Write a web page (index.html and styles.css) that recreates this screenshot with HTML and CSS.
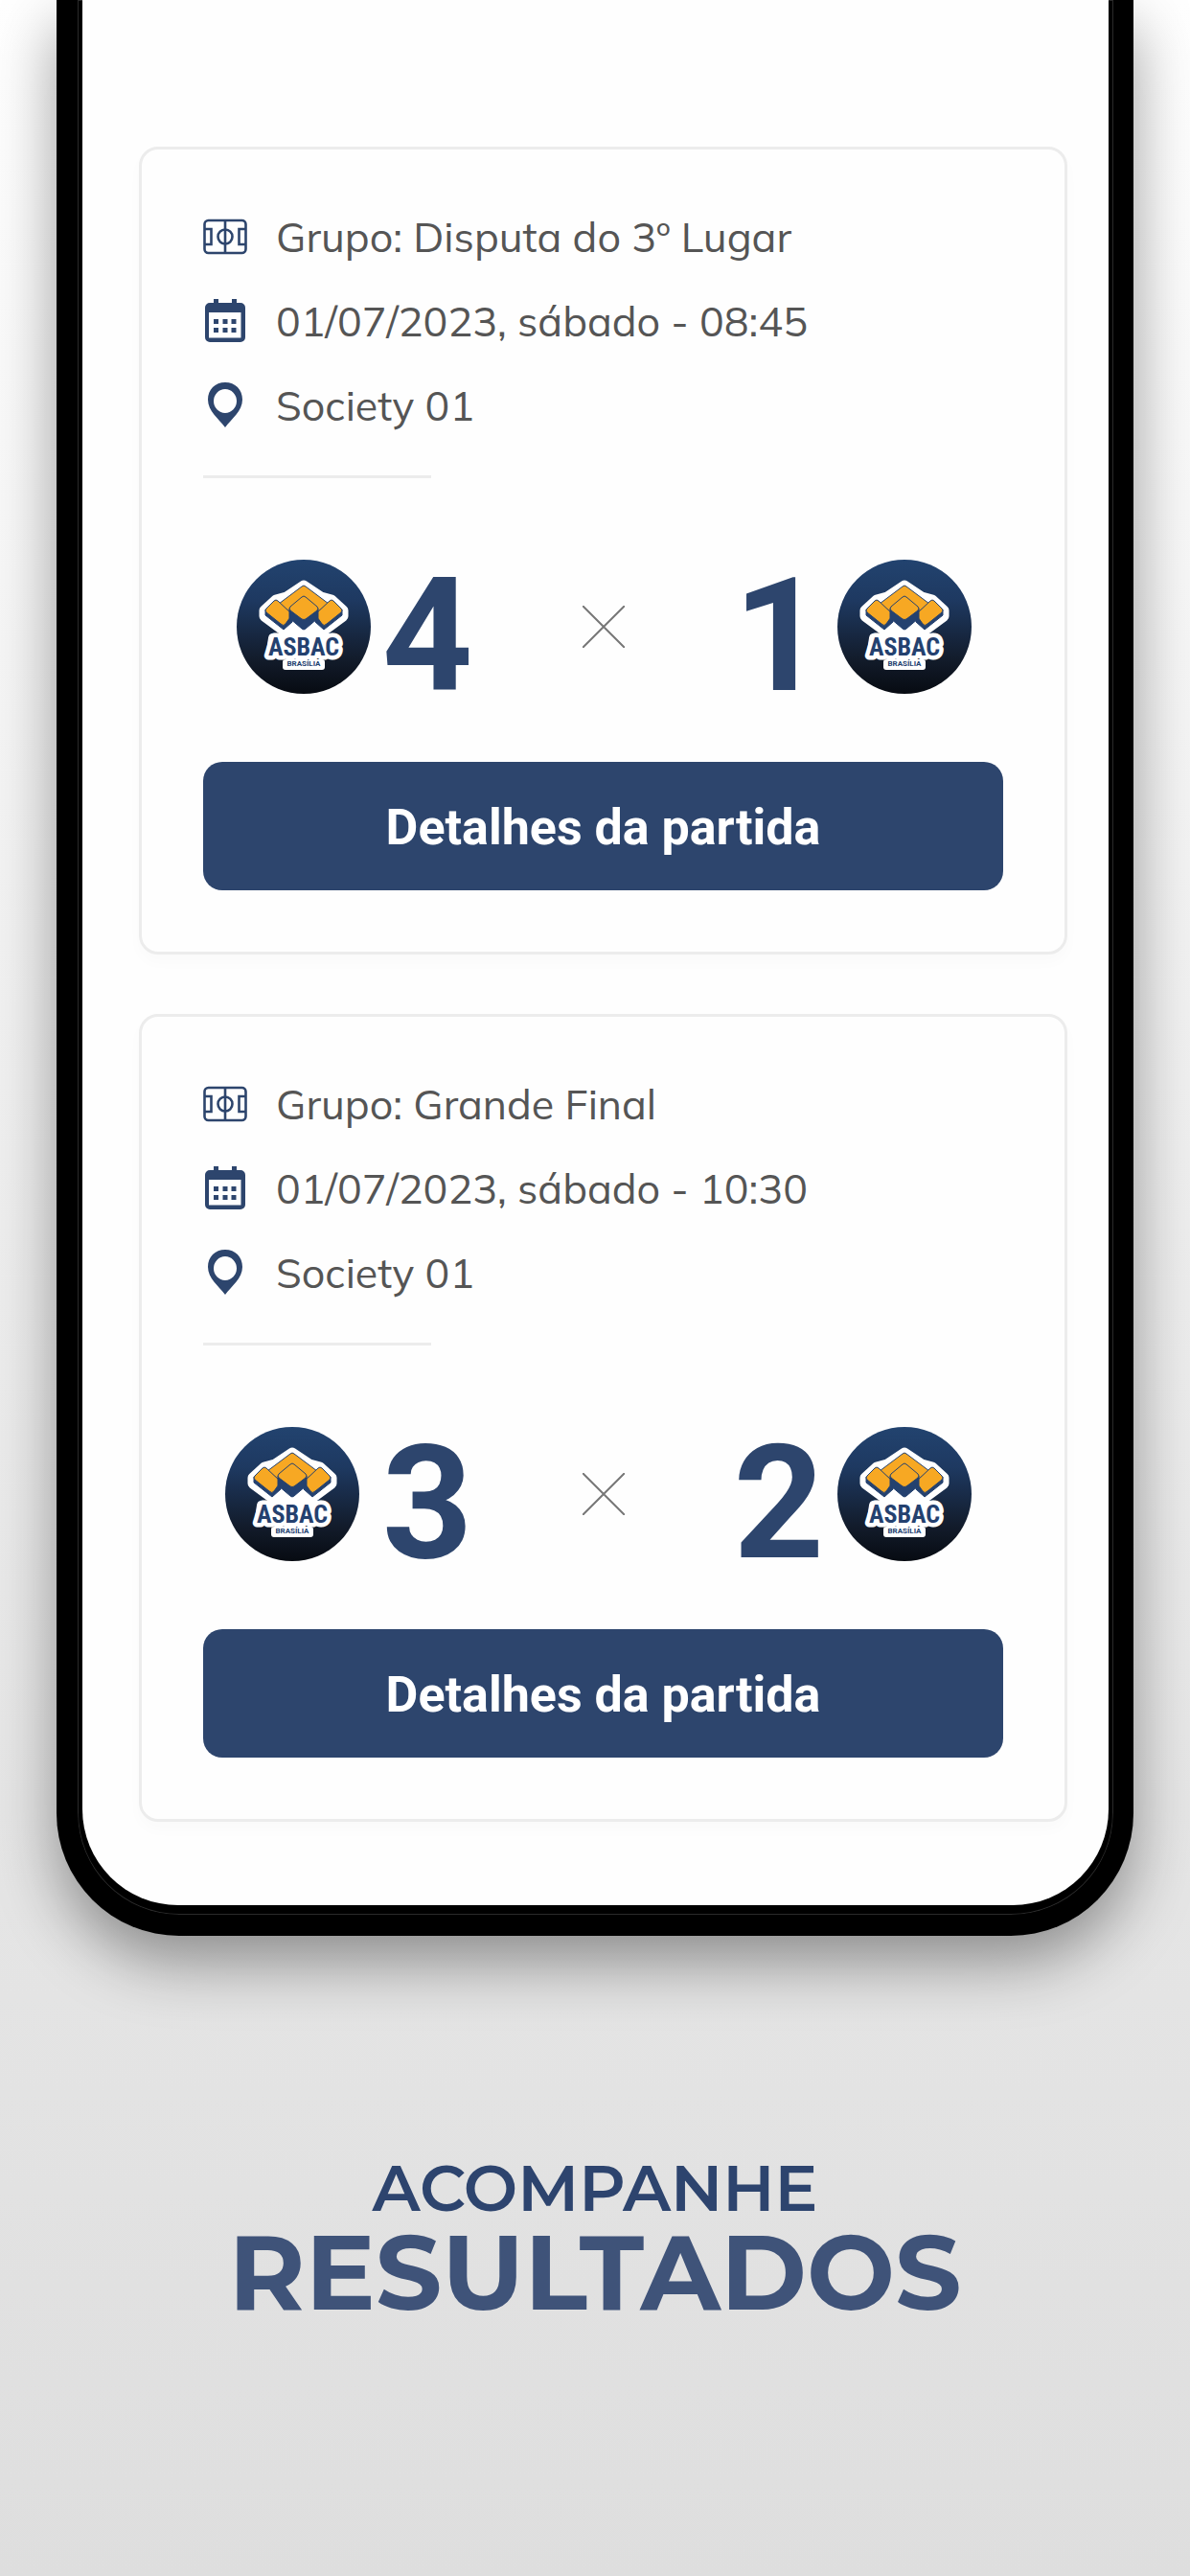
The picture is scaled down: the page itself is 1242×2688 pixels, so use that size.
FILE: index.html
```html
<!DOCTYPE html>
<html lang="pt-BR">
<head>
<meta charset="utf-8">
<meta name="viewport" content="width=device-width, initial-scale=1">
<title>Acompanhe resultados</title>
<link rel="stylesheet" href="styles.css">
</head>
<body>
<svg class="sprite" aria-hidden="true">
  <defs>
    <linearGradient id="crest-bg" x1="0" y1="0" x2="0" y2="1">
      <stop offset="0" stop-color="#22436f"/>
      <stop offset="0.3" stop-color="#1e3961"/>
      <stop offset="0.75" stop-color="#121b2a"/>
      <stop offset="1" stop-color="#070b12"/>
    </linearGradient>
    <symbol id="field" viewBox="0 0 46 48">
      <g fill="none" stroke="#2d456d" stroke-width="2.6">
        <rect x="1.5" y="7" width="43" height="34" rx="4"/>
        <path d="M23 7v34M1.500 16h7v16h-7M44.500 16h-7v16h7"/>
        <circle cx="23" cy="24" r="7.500"/>
      </g>
    </symbol>
    <symbol id="calendar" viewBox="0 0 46 48">
      <path fill="#2d456d" fill-rule="evenodd" d="M11 1h5v4h14V1h5v4h4a5 5 0 0 1 5 5v31a5 5 0 0 1-5 5H7a5 5 0 0 1-5-5V10a5 5 0 0 1 5-5h4zM6 15v26.500h33.500V15z"/>
      <path fill="#2d456d" d="M11 22h5v5h-5zM20.500 22h5v5h-5zM29.500 22h5v5h-5zM11 31h5v5h-5zM20.500 31h5v5h-5zM29.500 31h5v5h-5z"/>
    </symbol>
    <symbol id="pin" viewBox="0 0 46 48">
      <path fill="#2d456d" fill-rule="evenodd" d="M23 0C12.500 0 5 7.500 5 18c0 12 11 19.500 18 29 7-9.500 18-17 18-29C41 7.500 33.500 0 23 0zm0 7a12 12.500 0 1 1 0 25 12 12.500 0 0 1 0-25z"/>
    </symbol>
    <symbol id="crest" viewBox="0 0 140 140">
      <circle cx="70" cy="70" r="70" fill="url(#crest-bg)"/>
      <g fill="#fff" stroke="#fff" stroke-width="11" stroke-linejoin="round">
        <path d="M70 27l18 12 11 3 12 11v6L92 73 70 74 48 73 29 59v-6l12-11 11-3z"/>
        <path d="M38 82h64v14H36z" stroke-width="10"/>
        <path d="M51 107h38v5H51z" stroke-width="6"/>
      </g>
      <text class="crest-name" x="70" y="100" text-anchor="middle">ASBAC</text>
      <g stroke="#24416f" stroke-width="1" stroke-linejoin="round">
        <path fill="#f7a823" d="M68 28q2-2 4 0l24 18-26 19-26-19z"/>
        <path fill="#24416f" d="M30 52l28 6v7l-9 8-19-15z"/>
        <path fill="#24416f" d="M110 52l-28 6v7l9 8 19-15z"/>
        <path fill="#f7a823" d="M39 43q2-2 4 0l15 14-7 10q-2 3-5 0L31 55q-2-2 0-4z"/>
        <path fill="#f7a823" d="M101 43q-2-2-4 0L82 57l7 10q2 3 5 0l15-12q2-2 0-4z"/>
        <path fill="#24416f" d="M55 51v10l13 11q2 2 4 0l13-11V51z"/>
        <path fill="#f7a823" d="M68 39q2-2 4 0l12 10q2 2 0 4L72 62q-2 1-4 0L56 53q-2-2 0-4z"/>
      </g>
      <text class="crest-city" x="70" y="111" text-anchor="middle">BRASÍLIA</text>
    </symbol>
    <symbol id="versus" viewBox="0 0 44 44">
      <path d="M0 0l44 44M44 0L0 44" stroke="#777" stroke-width="2"/>
    </symbol>
  </defs>
</svg>
<main class="showcase">
  <section class="phone">
    <div class="screen">
      <article class="match">
        <ul class="facts">
          <li><svg class="icon" aria-hidden="true"><use href="#field"/></svg>Grupo: Disputa do 3º Lugar</li>
          <li><svg class="icon" aria-hidden="true"><use href="#calendar"/></svg>01/07/2023, sábado - 08:45</li>
          <li><svg class="icon" aria-hidden="true"><use href="#pin"/></svg>Society 01</li>
        </ul>
        <hr class="rule">
        <div class="score">
          <div class="team home"><svg class="crest" role="img" aria-label="ASBAC Brasília"><use href="#crest"/></svg><span class="goals">4</span></div>
          <svg class="versus" aria-hidden="true"><use href="#versus"/></svg>
          <div class="team away"><span class="goals">1</span><svg class="crest" role="img" aria-label="ASBAC Brasília"><use href="#crest"/></svg></div>
        </div>
        <button class="details" type="button">Detalhes da partida</button>
      </article>
      <article class="match">
        <ul class="facts">
          <li><svg class="icon" aria-hidden="true"><use href="#field"/></svg>Grupo: Grande Final</li>
          <li><svg class="icon" aria-hidden="true"><use href="#calendar"/></svg>01/07/2023, sábado - 10:30</li>
          <li><svg class="icon" aria-hidden="true"><use href="#pin"/></svg>Society 01</li>
        </ul>
        <hr class="rule">
        <div class="score">
          <div class="team home spaced"><svg class="crest" role="img" aria-label="ASBAC Brasília"><use href="#crest"/></svg><span class="goals">3</span></div>
          <svg class="versus" aria-hidden="true"><use href="#versus"/></svg>
          <div class="team away"><span class="goals">2</span><svg class="crest" role="img" aria-label="ASBAC Brasília"><use href="#crest"/></svg></div>
        </div>
        <button class="details" type="button">Detalhes da partida</button>
      </article>
    </div>
  </section>
  <h1 class="caption"><span class="caption-lead">ACOMPANHE</span><span class="caption-main">RESULTADOS</span></h1>
</main>
</body>
</html>
```

FILE: styles.css
```css
* {
  box-sizing: border-box;
}

body {
  margin: 0;
  min-height: 100vh;
  background: linear-gradient(#fff 0%, #e6e6e6 70%, #dedede 100%);
  color: #555;
  font-family: Muli, Mulish, Nunito, Lato, sans-serif;
}

.sprite {
  position: absolute;
  width: 0;
  height: 0;
}

.phone {
  margin: 0 59px;
  padding: 0 5px 10px;
  border: solid #000;
  border-width: 0 21px 22px 22px;
  border-radius: 0 0 128px 128px;
  background: #000;
  box-shadow: inset 0 0 0 1px #2a2a2a, 0 28px 64px rgba(0, 0, 0, 0.38);
}

.screen {
  display: flex;
  flex-direction: column;
  gap: 62px;
  padding: 153px 43px 87px 59px;
  border-radius: 0 0 100px 100px;
  background: #fefefe;
}

.match {
  padding: 47px 64px 64px;
  border: 3px solid #ececec;
  border-radius: 20px;
  box-shadow: 0 8px 16px rgba(0, 0, 0, 0.02);
}

.facts {
  margin: 0;
  padding: 0;
  list-style: none;
  font-size: 43px;
  line-height: 88px;
}

.facts li {
  display: flex;
  align-items: center;
  gap: 30px;
}

.icon {
  flex: none;
  width: 46px;
  height: 48px;
}

.rule {
  width: 238px;
  height: 3px;
  margin: 29px 0 75px;
  border: 0;
  background: #ececec;
}

.score {
  display: grid;
  grid-template-columns: 1fr auto 1fr;
  align-items: center;
  gap: 114px;
  margin-bottom: 61px;
}

.team {
  display: flex;
  align-items: center;
  gap: 12px;
}

.home {
  justify-content: flex-end;
}

.away {
  gap: 14px;
}

.spaced {
  gap: 24px;
}

.crest {
  flex: none;
  width: 140px;
  height: 140px;
}

.goals {
  padding-top: 20px;
  color: #2d456d;
  font: bold 165px/140px Roboto, sans-serif;
}

.versus {
  width: 44px;
  height: 44px;
}

.crest-name {
  fill: #24416f;
  stroke: #fff;
  stroke-width: 9px;
  stroke-linejoin: round;
  paint-order: stroke;
  font: bold 26px "Roboto Condensed", "Barlow Condensed", Roboto, sans-serif;
}

.crest-city {
  fill: #24416f;
  font: bold 8px Roboto, sans-serif;
}

.details {
  display: block;
  width: 100%;
  padding: 4px 0 0;
  border: 0;
  border-radius: 20px;
  background: #2d456d;
  color: #fff;
  font: bold 52px/130px Roboto, sans-serif;
}

.caption {
  display: flex;
  flex-direction: column;
  align-items: center;
  margin: 230px 0 0;
  color: #2d446e;
  font-family: Montserrat, Inter, sans-serif;
}

.caption-lead {
  font-size: 67px;
  font-weight: 600;
  line-height: 66px;
}

.caption-main {
  color: #3f5379;
  font-size: 109px;
  font-weight: 700;
  line-height: 110px;
}
```
